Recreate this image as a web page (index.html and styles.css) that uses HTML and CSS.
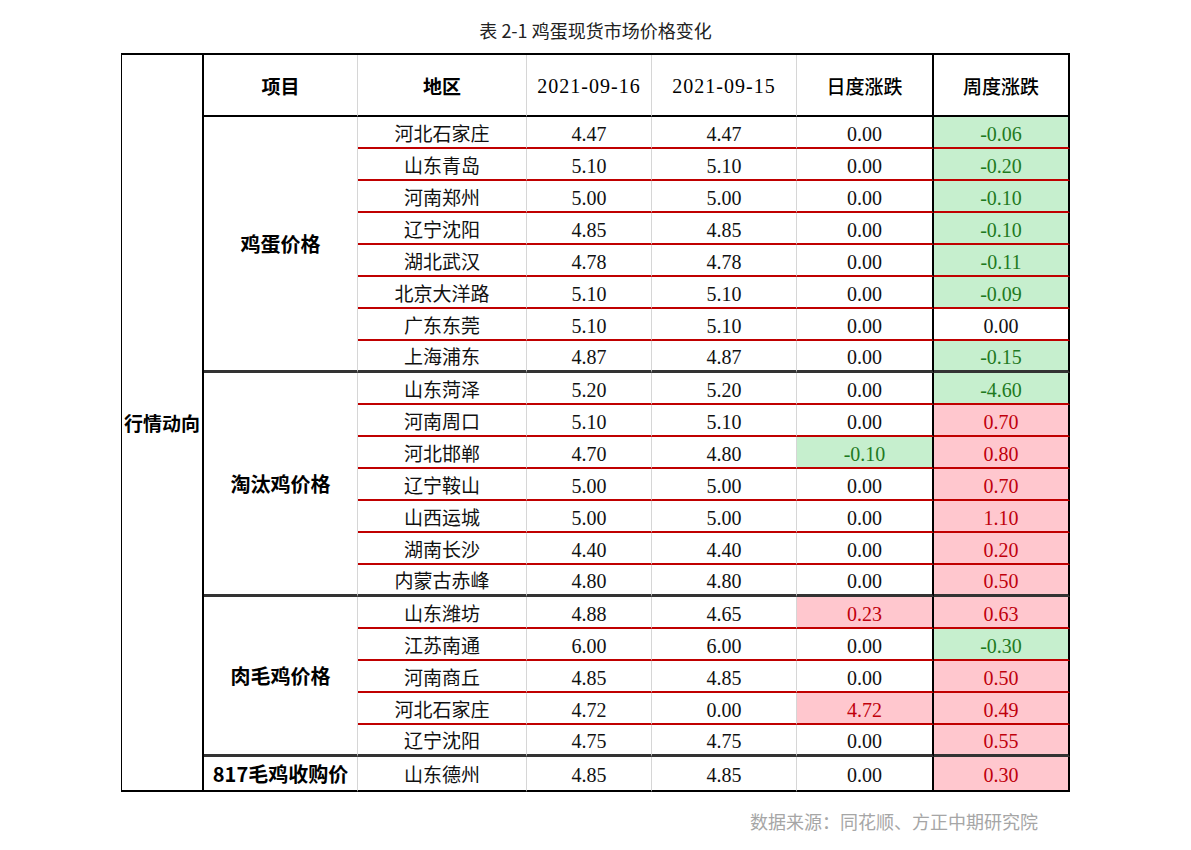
FILE: index.html
```html
<!DOCTYPE html>
<html lang="zh-CN">
<head>
<meta charset="utf-8">
<title>表 2-1 鸡蛋现货市场价格变化</title>
<link rel="stylesheet" href="styles.css">
</head>
<body>
<h1 class="title">表 2-1 鸡蛋现货市场价格变化</h1>
<div class="sheet">
  <div class="c side">行情动向</div>

  <div class="c hd">项目</div>
  <div class="c hd">地区</div>
  <div class="c hd date">2021-09-16</div>
  <div class="c hd date">2021-09-15</div>
  <div class="c hd day">日度涨跌</div>
  <div class="c hd wk">周度涨跌</div>

  <div class="c grp span8">鸡蛋价格</div>
  <div class="c reg">河北石家庄</div><div class="c num">4.47</div><div class="c num">4.47</div><div class="c num day">0.00</div><div class="c num wk g">-0.06</div>
  <div class="c reg">山东青岛</div><div class="c num">5.10</div><div class="c num">5.10</div><div class="c num day">0.00</div><div class="c num wk g">-0.20</div>
  <div class="c reg">河南郑州</div><div class="c num">5.00</div><div class="c num">5.00</div><div class="c num day">0.00</div><div class="c num wk g">-0.10</div>
  <div class="c reg">辽宁沈阳</div><div class="c num">4.85</div><div class="c num">4.85</div><div class="c num day">0.00</div><div class="c num wk g">-0.10</div>
  <div class="c reg">湖北武汉</div><div class="c num">4.78</div><div class="c num">4.78</div><div class="c num day">0.00</div><div class="c num wk g">-0.11</div>
  <div class="c reg">北京大洋路</div><div class="c num">5.10</div><div class="c num">5.10</div><div class="c num day">0.00</div><div class="c num wk g">-0.09</div>
  <div class="c reg">广东东莞</div><div class="c num">5.10</div><div class="c num">5.10</div><div class="c num day">0.00</div><div class="c num wk">0.00</div>
  <div class="c reg end">上海浦东</div><div class="c num end">4.87</div><div class="c num end">4.87</div><div class="c num day end">0.00</div><div class="c num wk g end">-0.15</div>

  <div class="c grp span7">淘汰鸡价格</div>
  <div class="c reg">山东菏泽</div><div class="c num">5.20</div><div class="c num">5.20</div><div class="c num day">0.00</div><div class="c num wk g">-4.60</div>
  <div class="c reg">河南周口</div><div class="c num">5.10</div><div class="c num">5.10</div><div class="c num day">0.00</div><div class="c num wk r">0.70</div>
  <div class="c reg">河北邯郸</div><div class="c num">4.70</div><div class="c num">4.80</div><div class="c num day g">-0.10</div><div class="c num wk r">0.80</div>
  <div class="c reg">辽宁鞍山</div><div class="c num">5.00</div><div class="c num">5.00</div><div class="c num day">0.00</div><div class="c num wk r">0.70</div>
  <div class="c reg">山西运城</div><div class="c num">5.00</div><div class="c num">5.00</div><div class="c num day">0.00</div><div class="c num wk r">1.10</div>
  <div class="c reg">湖南长沙</div><div class="c num">4.40</div><div class="c num">4.40</div><div class="c num day">0.00</div><div class="c num wk r">0.20</div>
  <div class="c reg end">内蒙古赤峰</div><div class="c num end">4.80</div><div class="c num end">4.80</div><div class="c num day end">0.00</div><div class="c num wk r end">0.50</div>

  <div class="c grp span5">肉毛鸡价格</div>
  <div class="c reg">山东潍坊</div><div class="c num">4.88</div><div class="c num">4.65</div><div class="c num day r">0.23</div><div class="c num wk r">0.63</div>
  <div class="c reg">江苏南通</div><div class="c num">6.00</div><div class="c num">6.00</div><div class="c num day">0.00</div><div class="c num wk g">-0.30</div>
  <div class="c reg">河南商丘</div><div class="c num">4.85</div><div class="c num">4.85</div><div class="c num day">0.00</div><div class="c num wk r">0.50</div>
  <div class="c reg">河北石家庄</div><div class="c num">4.72</div><div class="c num">0.00</div><div class="c num day r">4.72</div><div class="c num wk r">0.49</div>
  <div class="c reg end">辽宁沈阳</div><div class="c num end">4.75</div><div class="c num end">4.75</div><div class="c num day end">0.00</div><div class="c num wk r end">0.55</div>

  <div class="c grp last">817毛鸡收购价</div>
  <div class="c reg last">山东德州</div><div class="c num last">4.85</div><div class="c num last">4.85</div><div class="c num day last">0.00</div><div class="c num wk r last">0.30</div>
</div>
<p class="source">数据来源：同花顺、方正中期研究院</p>
</body>
</html>
```
FILE: styles.css
```css
html, body {
  margin: 0;
  padding: 0;
  background: #ffffff;
}

body {
  font-family: "Noto Sans CJK SC", "Noto Sans", sans-serif;
  color: #000000;
}

.title {
  margin: 0 0 13px 0;
  padding-top: 20px;
  height: 20px;
  line-height: 20px;
  font-size: 18px;
  font-weight: 400;
  text-align: center;
  color: #222222;
}

.sheet {
  display: grid;
  width: fit-content;
  margin-left: 121px;
  border-left: 1px solid #000000;
  border-top: 2px solid #000000;
  grid-template-columns: 82px 154px 169px 125px 145px 137px 136px;
  grid-template-rows: 62px repeat(20, 32px) 35px;
}

.c {
  box-sizing: border-box;
  display: flex;
  align-items: center;
  justify-content: center;
  border-right: 1px solid #d6d6d6;
  border-bottom: 2px solid #c00000;
  font-size: 19px;
  line-height: 1;
  white-space: nowrap;
  overflow: hidden;
}

.side {
  grid-row: 1 / span 22;
  border-right: 2px solid #000000;
  border-bottom: 2px solid #000000;
  font-weight: 700;
  font-size: 19px;
}

.hd {
  border-bottom: 2px solid #000000;
  font-weight: 700;
  font-size: 19px;
}

.hd.day,
.hd.wk {
  font-weight: 500;
}

.date {
  font-family: "Liberation Serif", serif;
  font-weight: 400;
  font-size: 20px;
  letter-spacing: 1px;
  padding-top: 2px;
}

.grp {
  font-weight: 700;
  font-size: 20px;
  border-bottom: 3px solid #333333;
}

.span8 { grid-row: span 8; }
.span7 { grid-row: span 7; }
.span5 { grid-row: span 5; }

.reg {
  font-weight: 400;
  color: #111111;
}

.num {
  font-family: "Liberation Serif", serif;
  font-size: 20px;
  color: #111111;
  padding-top: 3px;
}

.day {
  border-right: 2px solid #000000;
}

.wk {
  border-right: 2px solid #000000;
}

.end {
  border-bottom: 3px solid #333333;
}

.last {
  border-bottom: 2px solid #000000;
}

.g {
  background: #c6efce;
  color: #1f7a1f;
}

.r {
  background: #ffc7ce;
  color: #c0000c;
}

.source {
  margin: 17px 153px 0 0;
  text-align: right;
  font-size: 18px;
  line-height: 24px;
  color: #a6a6a6;
}
```
